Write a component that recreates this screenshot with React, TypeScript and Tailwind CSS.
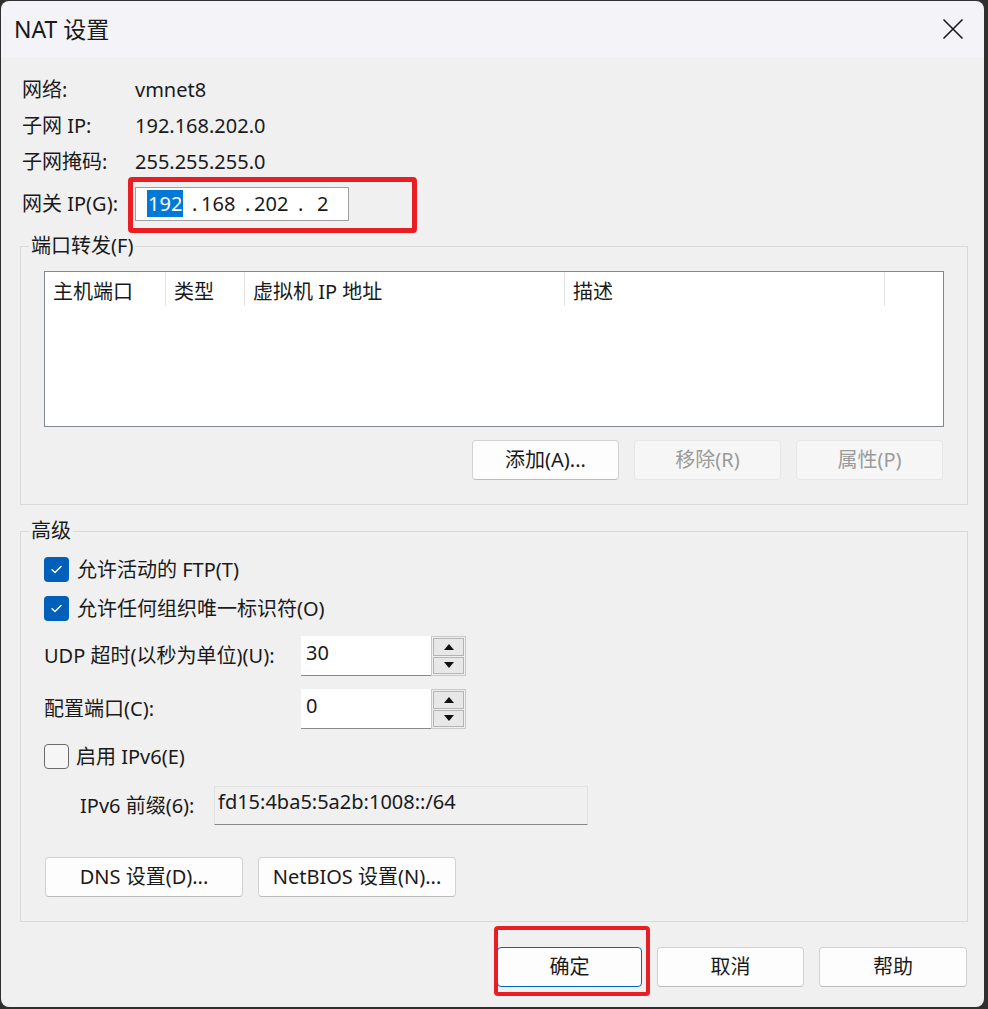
import type { ReactNode } from "react"

const font = "[font-family:'Noto_Sans','Noto_Sans_CJK_SC',sans-serif]"

function Button({ label, disabled, className = "" }: { label: string; disabled?: boolean; className?: string }) {
  return (
    <button
      className={`h-[40px] rounded-[4px] border text-[20px] leading-[24px] ${
        disabled
          ? "border-[#e6e6e6] bg-[#f6f6f6] text-[#9b9b9b]"
          : "border-[#d2d2d2] border-b-[#bcbcbc] bg-[#fdfdfd] text-[#1a1a1a]"
      } ${className}`}
    >
      {label}
    </button>
  )
}

function Group({ title, className = "", children }: { title: string; className?: string; children: ReactNode }) {
  return (
    <div className={`relative border border-[#d9d9d9] ${className}`}>
      <span className="absolute -top-[13px] left-[8px] bg-[#f0f0f0] px-[2px] text-[20px] leading-[24px]">{title}</span>
      {children}
    </div>
  )
}

function Checkbox({ checked }: { checked?: boolean }) {
  if (!checked) {
    return <span className="h-[25px] w-[25px] shrink-0 rounded-[4px] border border-[#6b6b6b] bg-[#f6f6f6]" />
  }
  return (
    <span className="flex h-[25px] w-[25px] shrink-0 items-center justify-center rounded-[4px] bg-[#005fb8]">
      <svg width="25" height="25" viewBox="0 0 25 25" fill="none">
        <path d="M8 12.8 L11 15.6 L17 9.6" stroke="#fff" strokeWidth="1.4" strokeLinecap="round" strokeLinejoin="round" />
      </svg>
    </span>
  )
}

function Spinner({ value }: { value: string }) {
  return (
    <div className="flex h-[40px]">
      <div className="w-[130px] border-b border-[#8a8a8a] bg-white pl-[5px] pt-[5px] text-[20px] leading-[24px]">{value}</div>
      <div className="flex w-[35px] flex-col gap-[1px] border border-[#c8c8c8] p-[1px]">
        <span className="flex flex-1 items-center justify-center border border-[#b4b4b4] bg-[#e8e8e8]">
          <svg width="10" height="6" viewBox="0 0 10 6">
            <path d="M0 6 L5 0 L10 6 Z" fill="#111" />
          </svg>
        </span>
        <span className="flex flex-1 items-center justify-center border border-[#b4b4b4] bg-[#e8e8e8]">
          <svg width="10" height="6" viewBox="0 0 10 6">
            <path d="M0 0 L10 0 L5 6 Z" fill="#111" />
          </svg>
        </span>
      </div>
    </div>
  )
}

const info = [
  ["网络:", "vmnet8"],
  ["子网 IP:", "192.168.202.0"],
  ["子网掩码:", "255.255.255.0"],
]

const columns = [
  { label: "主机端口", w: "w-[121px]" },
  { label: "类型", w: "w-[79px]" },
  { label: "虚拟机 IP 地址", w: "w-[320px]" },
  { label: "描述", w: "w-[320px]" },
]

export default function App() {
  return (
    <div className={`h-[1009px] w-[988px] overflow-hidden bg-[#2f2f2f] pl-[1px] pt-[1px] text-[#1a1a1a] ${font}`}>
      <div className="flex h-[1006px] w-[983px] flex-col overflow-hidden rounded-[8px]">
        {/* title bar */}
        <div className="flex h-[56px] shrink-0 items-center justify-between bg-[#f3f3f8] pl-[13px] pr-[20px]">
          <span className="text-[23px] leading-[28px]">NAT 设置</span>
          <svg width="22" height="22" viewBox="0 0 22 22">
            <path d="M1.5 1.5 L20.5 20.5 M20.5 1.5 L1.5 20.5" stroke="#1a1a1a" strokeWidth="1.6" />
          </svg>
        </div>

        <div className="flex-1 bg-[#f0f0f0] pl-[19px] pt-[15px] text-[20px] leading-[24px]">
          {info.map(([k, v]) => (
            <div key={k} className="flex h-[36px] items-center">
              <span className="w-[115px] pl-[2px]">{k}</span>
              <span>{v}</span>
            </div>
          ))}

          {/* gateway */}
          <div className="mt-[7px] flex h-[34px] items-center">
            <span className="w-[115px] pl-[2px]">网关 IP(G):</span>
            <div className="relative">
              <div className="flex h-[34px] w-[214px] items-center border border-[#a0a0a0] bg-white pl-[11px]">
                <span className="w-[45px]">
                  <span className="bg-[#0078d7] px-[1px] text-white">192</span>
                </span>
                <span className="w-[9px]">.</span>
                <span className="w-[44px]">168</span>
                <span className="w-[9px]">.</span>
                <span className="w-[44px]">202</span>
                <span className="w-[19px]">.</span>
                <span>2</span>
              </div>
              <span className="absolute -left-[7px] -top-[10px] h-[56px] w-[289px] rounded-[4px] border-[5px] border-[#e81e25]" />
            </div>
          </div>

          {/* port forwarding */}
          <Group title="端口转发(F)" className="mt-[25px] h-[259px] w-[948px] px-[23px] pt-[24px]">
            <div className="h-[156px] w-[900px] border border-[#828790] bg-white">
              <div className="flex h-[34px]">
                {columns.map((c) => (
                  <div key={c.label} className={`${c.w} flex items-end border-r border-[#e5e5e5] pb-[2px] pl-[8px]`}>
                    {c.label}
                  </div>
                ))}
              </div>
            </div>
            <div className="mt-[13px] flex justify-end gap-[15px] pr-[1px]">
              <Button label="添加(A)..." className="w-[147px]" />
              <Button label="移除(R)" disabled className="w-[147px]" />
              <Button label="属性(P)" disabled className="w-[147px]" />
            </div>
          </Group>

          {/* advanced */}
          <Group title="高级" className="mt-[26px] h-[391px] w-[948px] px-[23px] pt-[25px]">
            <div className="flex h-[25px] items-center gap-[8px]">
              <Checkbox checked />
              <span>允许活动的 FTP(T)</span>
            </div>
            <div className="mt-[14px] flex h-[25px] items-center gap-[8px]">
              <Checkbox checked />
              <span>允许任何组织唯一标识符(O)</span>
            </div>
            <div className="mt-[15px] flex items-center">
              <span className="w-[257px]">UDP 超时(以秒为单位)(U):</span>
              <Spinner value="30" />
            </div>
            <div className="mt-[13px] flex items-center">
              <span className="w-[257px]">配置端口(C):</span>
              <Spinner value="0" />
            </div>
            <div className="mt-[15px] flex h-[25px] items-center gap-[7px]">
              <Checkbox />
              <span>启用 IPv6(E)</span>
            </div>
            <div className="mt-[17px] flex items-center pl-[36px]">
              <span className="w-[134px]">IPv6 前缀(6):</span>
              <div className="h-[39px] w-[374px] border border-[#e2e2e2] border-b-[#8a8a8a] bg-[#f0f0f0] pl-[3px] pt-[3px]">
                fd15:4ba5:5a2b:1008::/64
              </div>
            </div>
            <div className="mt-[32px] flex gap-[15px] pl-[1px]">
              <Button label="DNS 设置(D)..." className="w-[198px]" />
              <Button label="NetBIOS 设置(N)..." className="w-[198px]" />
            </div>
          </Group>

          {/* dialog buttons */}
          <div className="mt-[25px] flex w-[948px] justify-end gap-[15px] pr-[1px]">
            <div className="relative">
              <button className="h-[40px] w-[145px] rounded-[4px] border border-[#0067c0] bg-[#fdfdfd] text-[20px] leading-[24px]">
                确定
              </button>
              <span className="absolute -left-[3px] -top-[21px] h-[70px] w-[156px] rounded-[4px] border-[4px] border-[#e81e25]" />
            </div>
            <Button label="取消" className="w-[147px]" />
            <Button label="帮助" className="w-[148px]" />
          </div>
        </div>
      </div>
    </div>
  )
}
